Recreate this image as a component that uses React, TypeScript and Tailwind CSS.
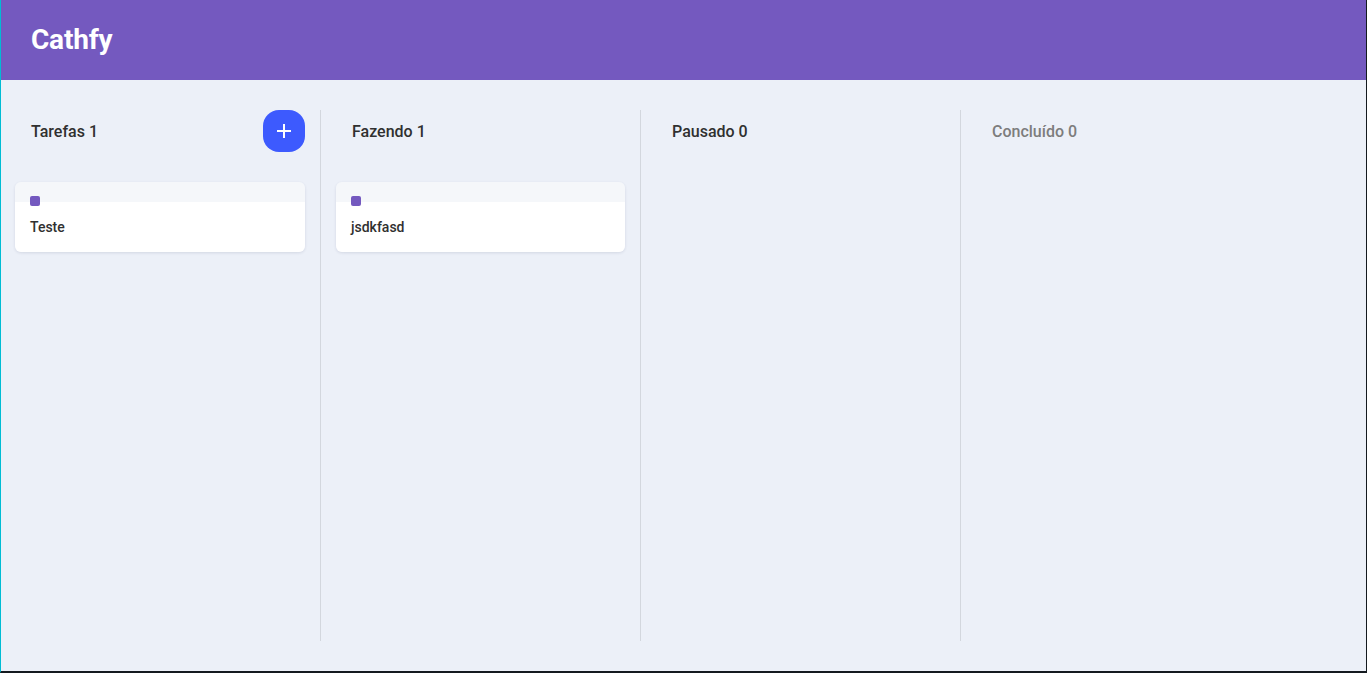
import React from "react";

type Card = { title: string };
type Column = { title: string; count: number; cards: Card[]; muted?: boolean; add?: boolean };

const columns: Column[] = [
  { title: "Tarefas", count: 1, cards: [{ title: "Teste" }], add: true },
  { title: "Fazendo", count: 1, cards: [{ title: "jsdkfasd" }] },
  { title: "Pausado", count: 0, cards: [] },
  { title: "Concluído", count: 0, cards: [], muted: true },
];

export default function App() {
  return (
    <div
      className="w-full h-[673px] flex flex-col bg-[#ecf0f8] border-l border-l-[#00bcd4] border-r border-r-[#141a1f] border-b-2 border-b-[#141a1f] overflow-hidden"
      style={{ fontFamily: "Roboto, 'Noto Sans', sans-serif" }}
    >
      <header className="h-[80px] shrink-0 bg-[#7459bf] flex items-center pl-[30px]">
        <h1 className="text-[28px] font-bold text-white leading-none tracking-[-0.2px]">Cathfy</h1>
      </header>
      <main className="flex pt-[30px]">
        {columns.map((col, i) => (
          <section
            key={col.title}
            className={
              (i === 0 ? "pl-[14px] " : "pl-[15px] ") +
              "w-[320px] h-[531px] pr-[15px] flex flex-col " +
              (i < columns.length - 1 ? "border-r border-r-[#d3d7de]" : "")
            }
          >
            <div className="h-[42px] flex items-center justify-between pl-[16px]">
              <h2
                className={
                  "text-[16px] font-medium leading-[20px] pt-[2px] " +
                  (col.muted ? "text-[#7d7d7d]" : "text-[#303030]")
                }
              >
                {col.title} {col.count}
              </h2>
              {col.add && (
                <button className="w-[42px] h-[42px] rounded-[16px] bg-[#3d5afe] flex items-center justify-center">
                  <svg width="16" height="16" viewBox="0 0 16 16" fill="none">
                    <path d="M8 1v14M1 8h14" stroke="white" strokeWidth="2" />
                  </svg>
                </button>
              )}
            </div>
            <div className="mt-[30px] flex flex-col gap-[10px]">
              {col.cards.map((c) => (
                <div
                  key={c.title}
                  className="rounded-[6px] bg-[linear-gradient(to_bottom,#f5f7fa_20px,#ffffff_20px)] shadow-[0_1px_3px_rgba(30,40,80,0.12)] pt-[14px] pb-[15px] px-[15px]"
                >
                  <div className="w-[10px] h-[10px] rounded-[2px] bg-[#7459bf]" />
                  <p className="mt-[11px] text-[14px] leading-[20px] font-medium text-[#303030]">
                    {c.title}
                  </p>
                </div>
              ))}
            </div>
          </section>
        ))}
      </main>
    </div>
  );
}
